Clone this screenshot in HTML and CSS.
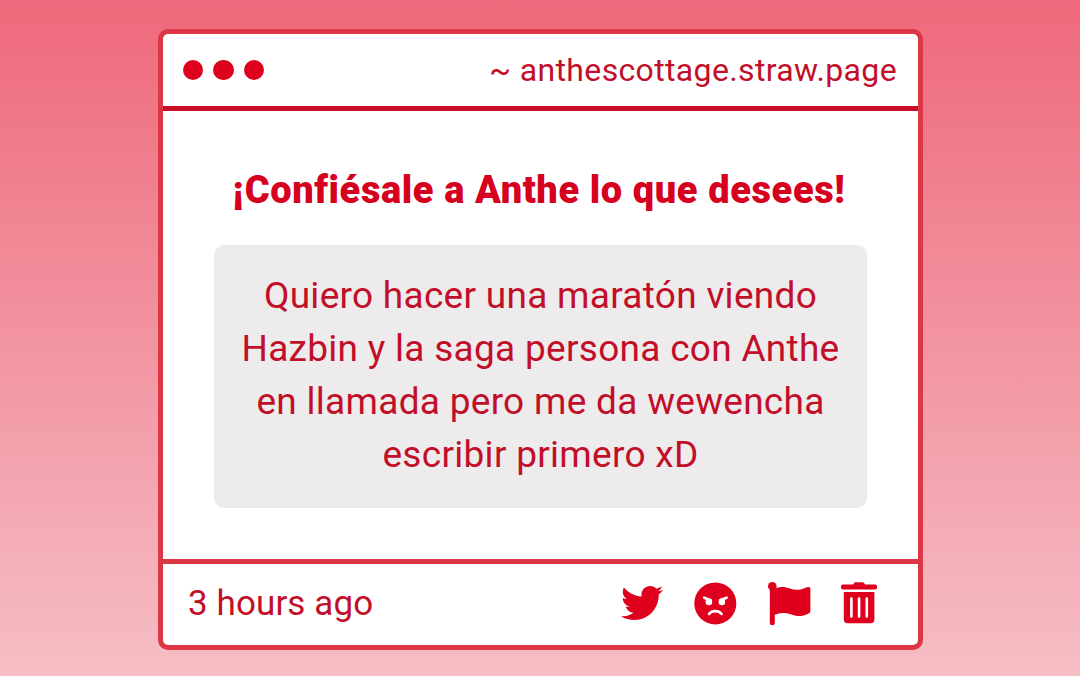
FILE: index.html
```
<!DOCTYPE html>
<html lang="es">
<head>
  <meta charset="UTF-8" />
  <meta name="viewport" content="width=device-width, initial-scale=1.0" />
  <title>anthescottage.straw.page</title>
  <link rel="stylesheet" href="styles.css">
</head>
<body>
  <div class="card">
    <div class="card-header">
      <div class="dots">
        <span class="dot"></span>
        <span class="dot"></span>
        <span class="dot"></span>
      </div>
      <div class="site">~ anthescottage.straw.page</div>
    </div>

    <div class="card-body">
      <h1>¡Confiésale a Anthe lo que desees!</h1>
      <div class="message">
        Quiero hacer una maratón viendo<br>
        Hazbin y la saga persona con Anthe<br>
        en llamada pero me da wewencha<br>
        escribir primero xD
      </div>
    </div>

    <div class="card-footer">
      <div class="time">3 hours ago</div>
      <div class="actions">
        <svg class="icon" viewBox="0 0 512 512">
          <path d="M459.37 151.716c.325 4.548.325 9.097.325 13.645 0 138.72-105.583 298.558-298.558 298.558-59.452 0-114.68-17.219-161.137-47.106 8.447.974 16.568 1.299 25.34 1.299 49.055 0 94.213-16.568 130.274-44.832-46.132-.975-84.792-31.188-98.112-72.772 6.498.974 12.995 1.624 19.818 1.624 9.421 0 18.843-1.3 27.614-3.573-48.081-9.747-84.143-51.98-84.143-102.985v-1.299c13.969 7.797 30.214 12.67 47.431 13.319-28.264-18.843-46.781-51.005-46.781-87.391 0-19.492 5.197-37.36 14.294-52.954 51.655 63.675 129.3 105.258 216.365 109.807-1.624-7.797-2.599-15.918-2.599-24.04 0-57.828 46.782-104.934 104.934-104.934 30.213 0 57.502 12.67 76.67 33.137 23.715-4.548 46.456-13.32 66.599-25.34-7.798 24.366-24.366 44.833-46.132 57.827 21.117-2.273 41.584-8.122 60.426-16.243-14.292 20.791-32.161 39.308-52.628 54.253z"/>
        </svg>
        <svg class="icon" viewBox="0 0 42 42">
          <circle cx="21.3" cy="21.4" r="21"/>
          <g class="line">
            <path d="M10.2 15.7L16.6 18.2M32.6 15.7L26.2 18.2"/>
            <path d="M15 32C17.9 28.2 24.7 28.2 27.6 32"/>
          </g>
          <g class="eye">
            <circle cx="14.9" cy="19.9" r="3.3"/>
            <circle cx="27.9" cy="19.9" r="3.3"/>
          </g>
        </svg>
        <svg class="icon" viewBox="0 0 42 42">
          <circle cx="4.3" cy="4.3" r="4.3"/>
          <path d="M1.8 5H6.8V40.8a2.5 2.5 0 0 1-5 0z"/>
          <path d="M6 6.8C12 4.4 17 4.6 22 6.6 28 8.8 33 7.8 39 5.2 41 4.4 42.4 5.2 42.4 7V28.5C42.4 30 41.7 31 40.2 31.8 34 35 28.5 34.6 22.5 32.3 16.5 30.2 11.5 30.7 6 33z"/>
        </svg>
        <svg class="icon trash" viewBox="3 0 36 42">
          <path d="M5 2.5H15L16.2 1Q16.7.3 17.6.3H24.6Q25.5.3 26 1L27.2 2.5H37.2Q39 2.5 39 4.3V5.8Q39 7.6 37.2 7.6H5Q3 7.6 3 5.800V4.300Q3 2.500 5 2.500z"/>
          <path d="M5.8 10H36.400V37.500Q36.400 41.200 32.800 41.200H9.400Q5.800 41.200 5.800 37.500z"/>
          <path class="slots" d="M13.400 16.500V34.500M21.100 16.500V34.500M28.800 16.500V34.500"/>
        </svg>
      </div>
    </div>
  </div>
</body>
</html>
```
FILE: styles.css
```
* {
  box-sizing: border-box;
}

body {
  margin: 0;
  height: 676px;
  padding: 29px 157px 0 158px;
  overflow: hidden;
  font-family: Roboto, sans-serif;
  background: linear-gradient(#ee697b, #f6bec5);
  color: #c20f29;
}

.card {
  display: flex;
  flex-direction: column;
  height: 621px;
  background-color: #fff;
  border: 5px solid #dc3744;
  border-radius: 10px;
}

.card-header {
  display: flex;
  align-items: center;
  justify-content: space-between;
  height: 77px;
  padding: 0 21px 0 20px;
  border-bottom: 5px solid #c90d28;
}

.dots {
  display: flex;
  gap: 10px;
}

.dot {
  width: 20.4px;
  height: 20.4px;
  border-radius: 50%;
  background-color: #de001d;
}

.site {
  font-size: 32px;
  letter-spacing: 0.35px;
}

.card-body {
  flex: 1;
  padding: 53px 51px 0;
  text-align: center;
}

h1 {
  margin: 0 3px 28px 0;
  font-size: 38px;
  font-weight: 900;
  line-height: 53px;
  letter-spacing: 0.6px;
  color: #d6001f;
  white-space: nowrap;
}

.message {
  height: 263px;
  padding-top: 24px;
  background-color: #eeebec;
  border-radius: 10px;
  font-size: 37px;
  line-height: 53px;
  letter-spacing: 0.29px;
  white-space: nowrap;
}

.card-footer {
  display: flex;
  align-items: center;
  justify-content: space-between;
  height: 86px;
  padding: 0 41px 3px 25px;
  border-top: 5px solid #dc3744;
}

.time {
  font-size: 35px;
  letter-spacing: 0.1px;
}

.actions {
  display: flex;
  gap: 31.5px;
}

.icon {
  width: 42px;
  height: 42px;
  fill: #de001d;
  overflow: visible;
}

.trash {
  width: 36px;
}

.line,
.slots {
  fill: none;
  stroke: #fff;
  stroke-width: 2.6;
  stroke-linecap: round;
}

.eye {
  fill: #fff;
}
```
